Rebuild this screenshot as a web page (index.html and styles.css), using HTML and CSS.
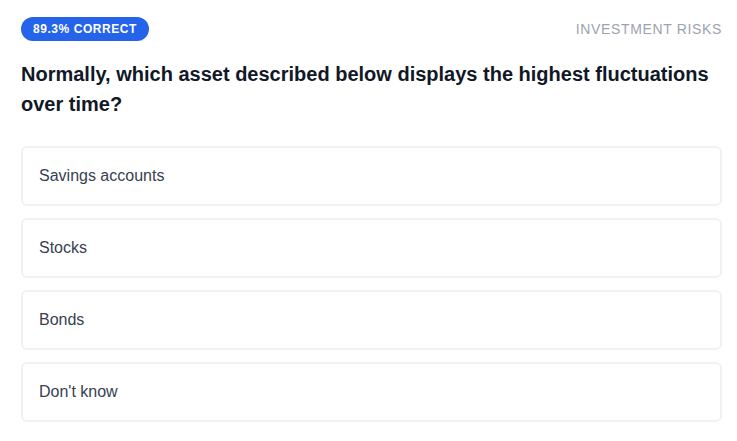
FILE: index.html
```html
<!DOCTYPE html>
<html>
<head>
<meta charset="utf-8">
<link rel="stylesheet" href="styles.css">
</head>
<body>
<div class="quiz">
  <div class="header">
    <span class="badge">89.3% CORRECT</span>
    <span class="category">INVESTMENT RISKS</span>
  </div>
  <h1 class="question">Normally, which asset described below displays the highest fluctuations over time?</h1>
  <div class="options">
    <div class="option">Savings accounts</div>
    <div class="option">Stocks</div>
    <div class="option">Bonds</div>
    <div class="option">Don't know</div>
  </div>
</div>
</body>
</html>
```
FILE: styles.css
```css
html, body {
  margin: 0;
  padding: 0;
  background: #ffffff;
}
body {
  font-family: "Liberation Sans", Arial, sans-serif;
}
.quiz {
  padding: 17px 15px 0 21px;
}
.header {
  display: flex;
  justify-content: space-between;
  align-items: center;
}
.badge {
  background: #2563eb;
  color: #ffffff;
  font-size: 12px;
  font-weight: 700;
  line-height: 16px;
  padding: 4px 12px;
  border-radius: 999px;
  letter-spacing: 0.55px;
}
.category {
  color: #9ca3af;
  font-size: 14px;
  letter-spacing: 0.65px;
}
.question {
  margin: 18px 0 27px;
  font-size: 20px;
  line-height: 30px;
  font-weight: 700;
  color: #111827;
}
.options {
  display: flex;
  flex-direction: column;
  gap: 12px;
}
.option {
  border: 2px solid #f1f1f2;
  border-radius: 6px;
  padding: 16px;
  font-size: 16px;
  line-height: 24px;
  color: #374151;
}
```
